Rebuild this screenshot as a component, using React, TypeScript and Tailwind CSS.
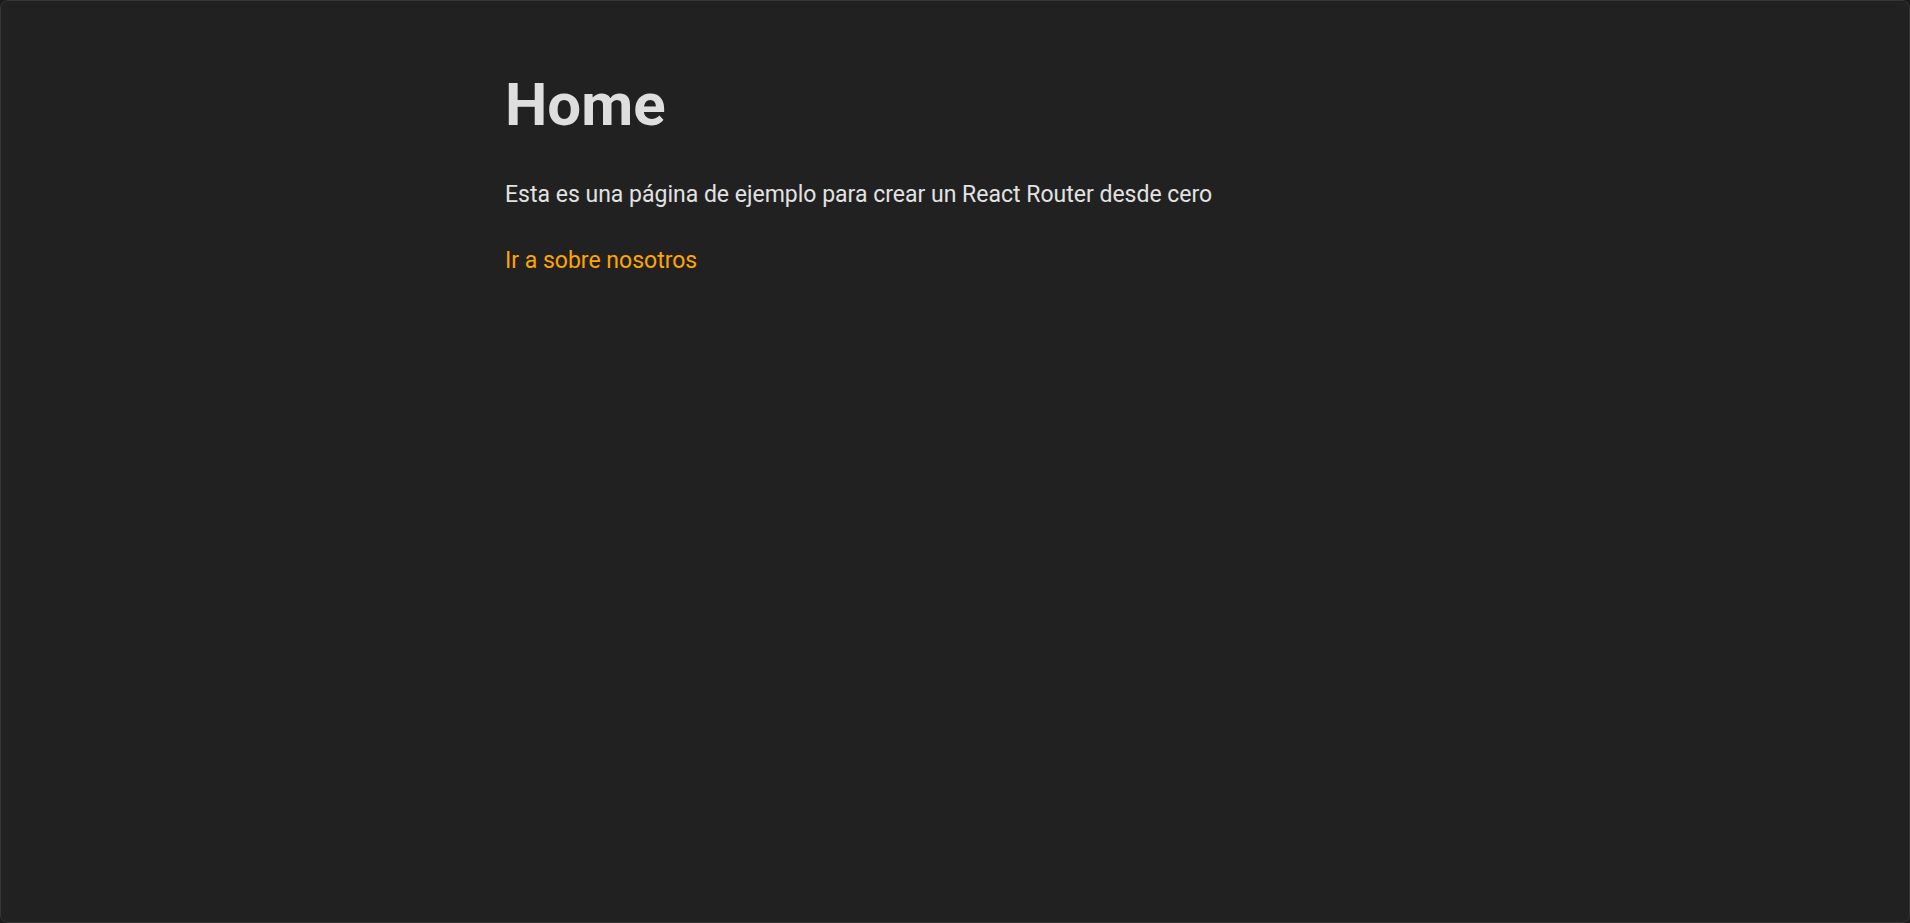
import React from 'react';

export default function App() {
  return (
    <div className="h-screen w-full bg-[#1b1b1b]" style={{ fontFamily: 'Roboto, "Liberation Sans", sans-serif' }}>
      <div className="h-full w-full rounded-lg border border-[#353535] bg-[#212121]">
        <main className="mx-auto max-w-[900px] pt-[68px]">
          <h1 className="text-[60px] font-bold leading-[1.2] text-[#dedede]">Home</h1>
          <p className="mt-[37px] text-[23px] leading-normal text-[#e2e2e2]">
            Esta es una página de ejemplo para crear un React Router desde cero
          </p>
          <a href="#" className="mt-[31px] block text-[23px] leading-normal text-[#ffa500]">
            Ir a sobre nosotros
          </a>
        </main>
      </div>
    </div>
  );
}
